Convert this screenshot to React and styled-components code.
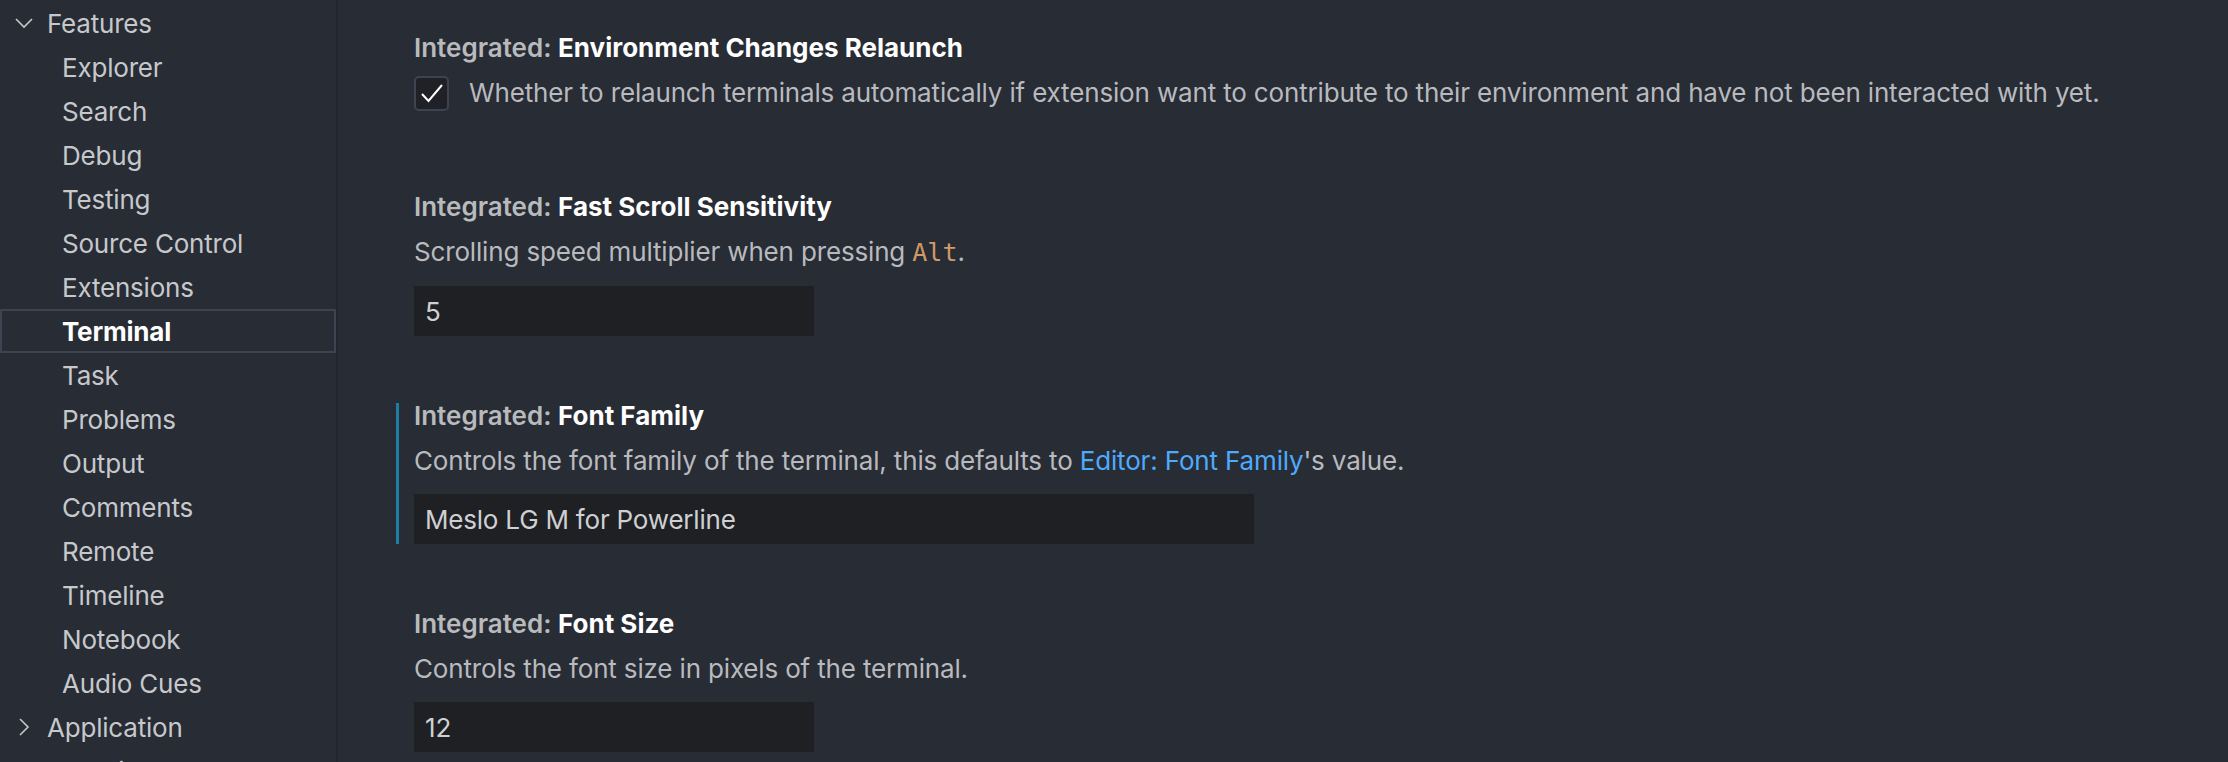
import React from "react";
import styled, { createGlobalStyle } from "styled-components";

const GlobalStyle = createGlobalStyle`
  html, body {
    margin: 0;
    padding: 0;
    background: #282c34;
    overflow: hidden;
  }
  * { box-sizing: border-box; }
`;

const Shell = styled.div`
  display: flex;
  height: 762px;
  width: 2228px;
  overflow: hidden;
  background: #282c34;
  font-family: Inter, "Noto Sans", sans-serif;
  -webkit-font-smoothing: antialiased;
`;

const Sidebar = styled.nav`
  width: 338px;
  flex-shrink: 0;
  padding-top: 1px;
  border-right: 2px solid #23262d;
  display: flex;
  flex-direction: column;
`;

const TreeRow = styled.div`
  height: 44px;
  flex-shrink: 0;
  display: flex;
  align-items: center;
  padding-left: ${(p) => (p.$depth ? 62 : 14)}px;
  font-size: 26px;
  color: ${(p) => (p.$selected ? "#ffffff" : "#c6c8cc")};
  font-weight: ${(p) => (p.$selected ? 700 : 400)};
  box-shadow: ${(p) => (p.$selected ? "inset 0 0 0 2px #3d4350" : "none")};
  letter-spacing: -0.2px;
`;

const Chevron = styled.svg`
  width: 20px;
  height: 20px;
  margin-right: 13px;
  flex-shrink: 0;
`;

const Pane = styled.main`
  flex: 1;
  padding: 6px 0 0 58px;
  display: flex;
  flex-direction: column;
`;

const Setting = styled.section`
  padding: 29px 0 ${(p) => p.$bottom || 38}px;
  flex-shrink: 0;
`;

const Body = styled.div`
  border-left: 3px solid ${(p) => (p.$focused ? "#1c7f9f" : "transparent")};
  padding-left: 15px;
  display: flex;
  flex-direction: column;
`;

const Title = styled.div`
  font-size: 26px;
  line-height: 26px;
  font-weight: 700;
  color: #ffffff;
`;

const Category = styled.span`
  color: #b9babd;
  font-weight: 600;
`;

const Desc = styled.div`
  margin-top: 14px;
  font-size: 26px;
  line-height: 36px;
  color: #b8babf;
  letter-spacing: -0.16px;
`;

const Code = styled.code`
  font-family: "DejaVu Sans Mono", "Liberation Mono", monospace;
  font-size: 25px;
  letter-spacing: 0;
  color: #d19a66;
`;

const Link = styled.a`
  color: #4daafc;
  text-decoration: none;
`;

const CheckRow = styled.label`
  margin-top: 14px;
  display: flex;
  align-items: center;
  gap: 20px;
  font-size: 26px;
  line-height: 36px;
  color: #b8babf;
  letter-spacing: -0.16px;
`;

const CheckBox = styled.span`
  width: 35px;
  height: 35px;
  flex-shrink: 0;
  border-radius: 5px;
  border: 2px solid #3d4350;
  background: #1f2126;
  display: flex;
  align-items: center;
  justify-content: center;
`;

const Input = styled.div`
  margin-top: 15px;
  width: ${(p) => p.$width}px;
  height: 50px;
  background: #1e2024;
  color: #cfd0d2;
  font-size: 26px;
  letter-spacing: -0.2px;
  display: flex;
  align-items: center;
  padding-left: 11px;
`;

const ChevronDown = () => (
  <Chevron viewBox="0 0 20 20">
    <path d="M2 6 L10 14 L18 6" fill="none" stroke="#c6c8cc" strokeWidth="1.6" />
  </Chevron>
);

const ChevronRight = () => (
  <Chevron viewBox="0 0 20 20">
    <path d="M6 2 L14 10 L6 18" fill="none" stroke="#c6c8cc" strokeWidth="1.6" />
  </Chevron>
);

const children = [
  "Explorer",
  "Search",
  "Debug",
  "Testing",
  "Source Control",
  "Extensions",
  "Terminal",
  "Task",
  "Problems",
  "Output",
  "Comments",
  "Remote",
  "Timeline",
  "Notebook",
  "Audio Cues",
];

export default function App() {
  return (
    <Shell>
      <GlobalStyle />
      <Sidebar>
        <TreeRow>
          <ChevronDown />
          Features
        </TreeRow>
        {children.map((c) => (
          <TreeRow key={c} $depth={1} $selected={c === "Terminal"}>
            {c}
          </TreeRow>
        ))}
        <TreeRow>
          <ChevronRight />
          Application
        </TreeRow>
        <TreeRow>
          <ChevronRight />
          Security
        </TreeRow>
      </Sidebar>

      <Pane>
        <Setting $bottom={54}>
          <Body>
            <Title>
              <Category>Integrated: </Category>Environment Changes Relaunch
            </Title>
            <CheckRow>
              <CheckBox>
                <svg width="26" height="26" viewBox="0 0 26 26">
                  <path d="M3 14 L9.5 21 L23 5" fill="none" stroke="#ffffff" strokeWidth="2" />
                </svg>
              </CheckBox>
              Whether to relaunch terminals automatically if extension want to contribute to their environment and have not been interacted with yet.
            </CheckRow>
          </Body>
        </Setting>

        <Setting>
          <Body>
            <Title>
              <Category>Integrated: </Category>Fast Scroll Sensitivity
            </Title>
            <Desc>
              Scrolling speed multiplier when pressing <Code>Alt</Code>.
            </Desc>
            <Input $width={400}>5</Input>
          </Body>
        </Setting>

        <Setting>
          <Body $focused>
            <Title>
              <Category>Integrated: </Category>Font Family
            </Title>
            <Desc>
              Controls the font family of the terminal, this defaults to <Link>Editor: Font Family</Link>'s value.
            </Desc>
            <Input $width={840}>Meslo LG M for Powerline</Input>
          </Body>
        </Setting>

        <Setting>
          <Body>
            <Title>
              <Category>Integrated: </Category>Font Size
            </Title>
            <Desc>Controls the font size in pixels of the terminal.</Desc>
            <Input $width={400}>12</Input>
          </Body>
        </Setting>
      </Pane>
    </Shell>
  );
}
